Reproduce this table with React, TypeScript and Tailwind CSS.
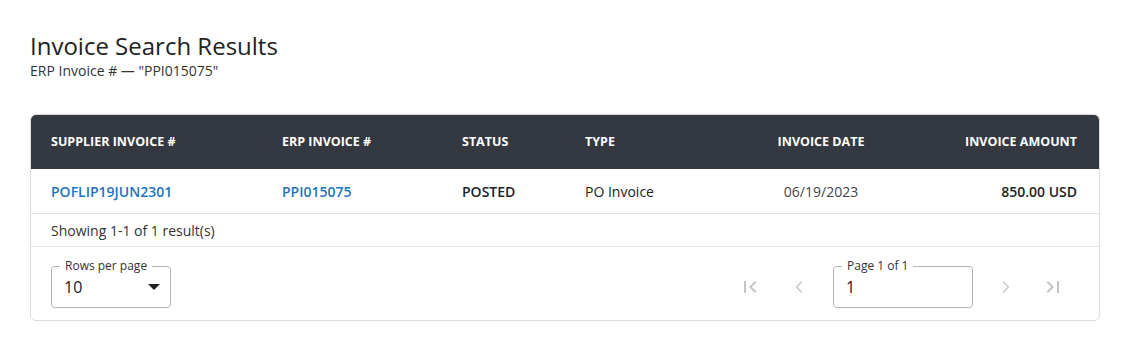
import { ChevronLeft, ChevronRight } from 'lucide-react';

const cols = 'grid grid-cols-[231px_180px_123px_170px_132px_1fr] items-center pl-[20px] pr-[22px]';

function FirstPageIcon() {
  return (
    <svg width="24" height="24" viewBox="0 0 24 24" fill="currentColor">
      <path d="M18.41 16.59 13.82 12l4.59-4.59L17 6l-6 6 6 6zM6 6h2v12H6z" />
    </svg>
  );
}

function LastPageIcon() {
  return (
    <svg width="24" height="24" viewBox="0 0 24 24" fill="currentColor">
      <path d="M5.59 7.41 10.18 12l-4.59 4.59L7 18l6-6-6-6zM16 6h2v12h-2z" />
    </svg>
  );
}

function OutlinedField({ label, width, children }: { label: string; width: string; children: React.ReactNode }) {
  return (
    <div className={`relative h-[42px] ${width} rounded-[4px] border border-[#b5b5b5] flex items-center px-3`}>
      <span className="absolute -top-[9px] left-[8px] bg-white px-[5px] text-[12px] leading-[16px] text-[#333]">
        {label}
      </span>
      {children}
    </div>
  );
}

export default function App() {
  return (
    <div className="min-h-[355px] bg-white px-[30px] pt-[32px]" style={{ fontFamily: '"Open Sans", sans-serif' }}>
      <h1 className="text-[24px] leading-[28px] text-[#222]">Invoice Search Results</h1>
      <p className="mt-[2px] text-[14px] leading-[18px] text-[#333]">ERP Invoice # — "PPI015075"</p>

      <div className="mt-[34px] w-[1070px] rounded-[6px] border border-[#dcdcdc] overflow-hidden">
        <div className={`${cols} h-[54px] bg-[#343840] text-[12.5px] font-bold text-white`}>
          <div>SUPPLIER INVOICE #</div>
          <div>ERP INVOICE #</div>
          <div>STATUS</div>
          <div>TYPE</div>
          <div className="text-center">INVOICE DATE</div>
          <div className="text-right">INVOICE AMOUNT</div>
        </div>
        <div className={`${cols} h-[45px] border-b border-[#e2e2e2] text-[14px]`}>
          <a className="font-semibold text-[#1c75bc]">POFLIP19JUN2301</a>
          <a className="font-semibold text-[#1c75bc]">PPI015075</a>
          <div className="font-semibold text-[#222]">POSTED</div>
          <div className="font-medium text-[#222]">PO Invoice</div>
          <div className="text-center text-[#444]">06/19/2023</div>
          <div className="text-right font-semibold text-[#222]">850.00 USD</div>
        </div>
        <div className="h-[33px] border-b border-[#e2e2e2] pl-[20px] flex items-center text-[14px] text-[#333]">
          Showing 1-1 of 1 result(s)
        </div>
        <div className="h-[73px] flex items-center justify-between pl-[20px] pr-[34px] pt-[6px]">
          <OutlinedField label="Rows per page" width="w-[120px]">
            <span className="text-[16px] text-[#1a1a1a]">10</span>
            <svg className="ml-auto mr-[-2px]" width="12" height="6" viewBox="0 0 12 6">
              <path d="M0 0h12L6 6z" fill="#222" />
            </svg>
          </OutlinedField>
          <div className="flex items-center text-[#c4c4c4]">
            <FirstPageIcon />
            <ChevronLeft className="ml-[27px] mr-[24px]" size={20} strokeWidth={1.5} />
            <OutlinedField label="Page 1 of 1" width="w-[140px]">
              <span className="text-[16px] text-[#1a1a1a]">1</span>
            </OutlinedField>
            <ChevronRight className="ml-[23px] mr-[25px]" size={20} strokeWidth={1.5} />
            <LastPageIcon />
          </div>
        </div>
      </div>
    </div>
  );
}
